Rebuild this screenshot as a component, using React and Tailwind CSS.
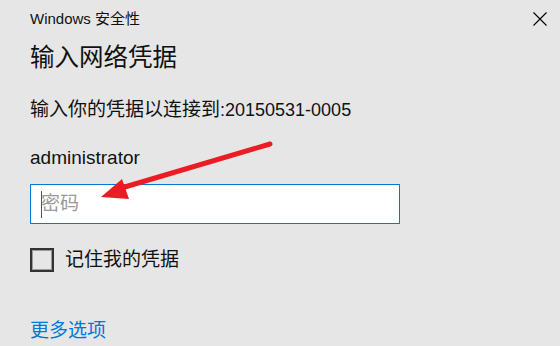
export default function App() {
  const font = { fontFamily: '"Liberation Sans", "Noto Sans CJK SC", sans-serif' };

  return (
    <div
      className="relative w-[560px] h-[346px] overflow-hidden bg-[#e6e6e6] text-[#111]"
      style={font}
    >
      {/* title bar */}
      <div className="flex h-[38px] items-center justify-between pl-[30px] pr-[13px]">
        <span className="text-[15px] leading-[20px]">Windows 安全性</span>
        <svg width="14" height="14" viewBox="0 0 14 14" className="text-black">
          <path d="M0.5 0.5 L13.5 13.5 M13.5 0.5 L0.5 13.5" stroke="currentColor" strokeWidth="1.1" />
        </svg>
      </div>

      <div className="px-[30px]">
        <h1 className="text-[24.5px] leading-[40px] font-normal">输入网络凭据</h1>

        <p className="mt-[18px] text-[19px] leading-[28px] whitespace-nowrap">
          输入你的凭据以连接到<span className="text-[18px]">:20150531-0005</span>
        </p>

        <p className="mt-[20px] text-[19px] leading-[28px]">administrator</p>

        <div className="mt-[12px] flex h-[40px] w-[370px] items-center border border-[#0078d7] bg-white pl-[10px]">
          <span className="mr-[-1px] h-[27px] w-px bg-[#555]" />
          <span className="text-[19px] leading-[28px] text-[#9a9a9a]">密码</span>
        </div>

        <label className="mt-[24px] flex h-[24px] items-center gap-[11px]">
          <span className="h-[24px] w-[24px] border-2 border-[#333] shadow-[inset_0_0_0_1px_#9a9a9a]" />
          <span className="text-[19px] leading-[28px]">记住我的凭据</span>
        </label>

        <a className="mt-[45px] block text-[19px] leading-[28px] text-[#0078d7]">更多选项</a>
      </div>

      {/* red annotation arrow */}
      <svg className="pointer-events-none absolute left-0 top-0" width="560" height="346">
        <line x1="270" y1="144" x2="118" y2="189" stroke="#ec1c24" strokeWidth="5" strokeLinecap="round" />
        <polygon points="101,197 122,179 129,199" fill="#ec1c24" />
      </svg>
    </div>
  );
}
